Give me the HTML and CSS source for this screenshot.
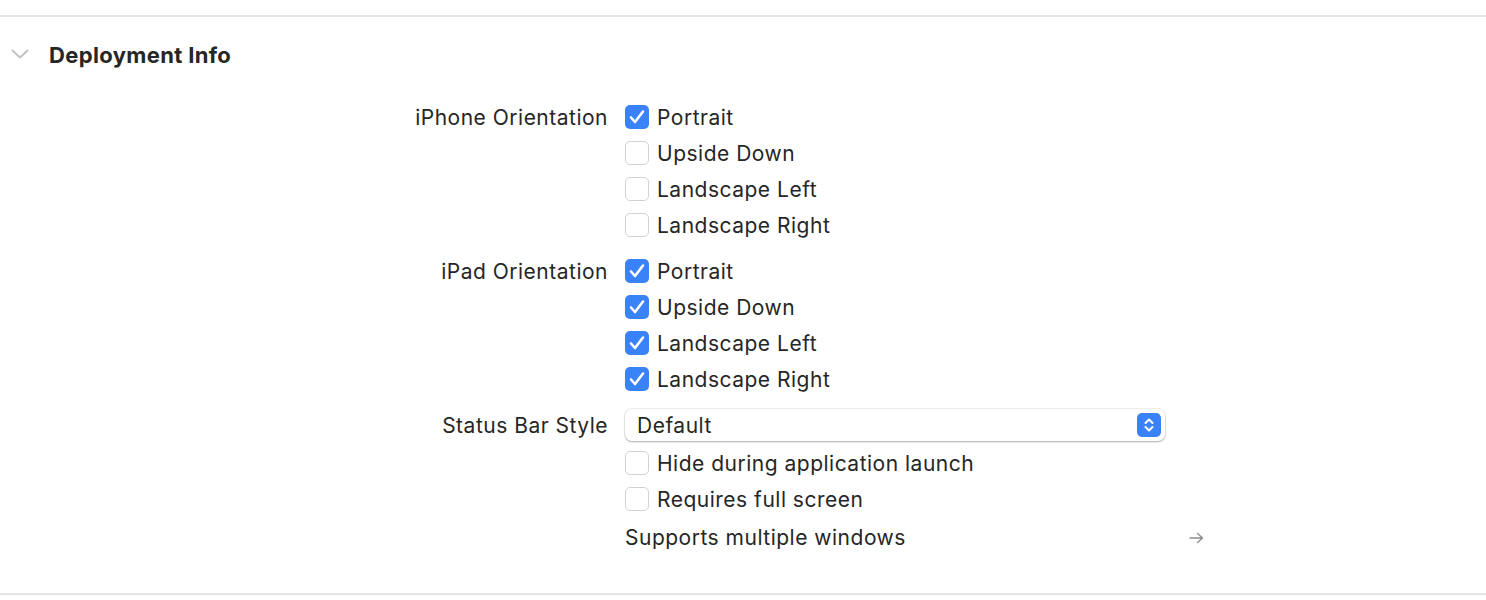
FILE: index.html
```html
<!DOCTYPE html>
<html lang="en">
<head>
    <meta charset="UTF-8">
    <title>Deployment Info</title>
    <link rel="stylesheet" href="styles.css">
</head>
<body>
    <section class="section">
        <div class="section-header">
            <svg class="chevron" width="18" height="10" viewBox="0 0 18 10">
                <path d="M1.5 1.5 L9 8.5 L16.5 1.5" fill="none" stroke="#c2c2c2" stroke-width="2" stroke-linecap="round" stroke-linejoin="round"/>
            </svg>
            <h2>Deployment Info</h2>
        </div>

        <div class="form">
            <div class="group">
                <div class="label">iPhone Orientation</div>
                <div class="controls">
                    <label class="check"><span class="box on"></span>Portrait</label>
                    <label class="check"><span class="box"></span>Upside Down</label>
                    <label class="check"><span class="box"></span>Landscape Left</label>
                    <label class="check"><span class="box"></span>Landscape Right</label>
                </div>
            </div>

            <div class="group">
                <div class="label">iPad Orientation</div>
                <div class="controls">
                    <label class="check"><span class="box on"></span>Portrait</label>
                    <label class="check"><span class="box on"></span>Upside Down</label>
                    <label class="check"><span class="box on"></span>Landscape Left</label>
                    <label class="check"><span class="box on"></span>Landscape Right</label>
                </div>
            </div>

            <div class="group">
                <div class="label">Status Bar Style</div>
                <div class="controls">
                    <div class="popup">
                        <span>Default</span>
                        <span class="stepper">
                            <svg width="12" height="16" viewBox="0 0 12 16">
                                <path d="M2.5 6 L6 2.5 L9.5 6 M2.5 10 L6 13.5 L9.5 10" fill="none" stroke="#fff" stroke-width="2" stroke-linecap="round" stroke-linejoin="round"/>
                            </svg>
                        </span>
                    </div>
                    <label class="check tight"><span class="box"></span>Hide during application launch</label>
                    <label class="check"><span class="box"></span>Requires full screen</label>
                    <div class="link-row">
                        <span>Supports multiple windows</span>
                        <svg class="arrow" width="15" height="12" viewBox="0 0 15 12">
                            <path d="M1 6 H13.5 M8.5 1.5 L13.5 6 L8.5 10.5" fill="none" stroke="#8c8c8c" stroke-width="1.3" stroke-linecap="round" stroke-linejoin="round"/>
                        </svg>
                    </div>
                </div>
            </div>
        </div>
    </section>
</body>
</html>
```

FILE: styles.css
```css
body {
    margin: 0;
    background: #fff;
    font-family: Inter, "Noto Sans", sans-serif;
    color: #262626;
}
.section {
    margin-top: 15px;
    border-top: 2px solid #e4e4e4;
    border-bottom: 2px solid #e4e4e4;
    padding-bottom: 38px;
}
.section-header {
    display: flex;
    align-items: center;
    height: 76px;
    padding-left: 11px;
}
.chevron {
    margin-right: 20px;
    margin-top: -2px;
}
.section-header h2 {
    margin: 0;
    font-size: 22px;
    font-weight: 700;
    letter-spacing: 0.35px;
    color: #262626;
}
.form {
    display: flex;
    flex-direction: column;
    gap: 10px;
    margin-top: 6px;
    font-size: 21px;
    letter-spacing: 0.5px;
}
.group {
    display: grid;
    grid-template-columns: 607px 580px;
    column-gap: 18px;
}
.label {
    text-align: right;
    line-height: 36px;
    margin-right: -1px;
    padding-top: 1px;
}
.controls {
    display: flex;
    flex-direction: column;
}
.check {
    display: flex;
    align-items: center;
    height: 36px;
}
.check.tight {
    margin-top: 2px;
}
.box {
    width: 22px;
    height: 22px;
    border: 1px solid #d2d2d2;
    border-radius: 5px;
    margin-right: 8px;
    background: #fff;
    box-sizing: content-box;
}
.box.on {
    width: 24px;
    height: 24px;
    border: none;
    background: #3a82f7 url("data:image/svg+xml;utf8,<svg xmlns='http://www.w3.org/2000/svg' width='24' height='24' viewBox='0 0 24 24'><path d='M6 12.5 L10 17 L18 6.5' fill='none' stroke='white' stroke-width='2.6' stroke-linecap='round' stroke-linejoin='round'/></svg>") no-repeat center;
}
.popup {
    display: flex;
    align-items: center;
    justify-content: space-between;
    width: 540px;
    height: 32px;
    margin: 2px 0;
    padding: 0 4px 0 12px;
    box-sizing: border-box;
    border-radius: 7px;
    background: #fff;
    box-shadow: 0 0 0 1px rgba(0, 0, 0, 0.06), 0 1px 2px rgba(0, 0, 0, 0.28);
}
.stepper {
    display: flex;
    align-items: center;
    justify-content: center;
    width: 24px;
    height: 24px;
    border-radius: 5px;
    background: #3a82f7;
}
.link-row {
    display: flex;
    align-items: center;
    justify-content: space-between;
    height: 36px;
    margin-top: 2px;
}
.arrow {
    margin-right: 1px;
    margin-top: 1px;
}
```
